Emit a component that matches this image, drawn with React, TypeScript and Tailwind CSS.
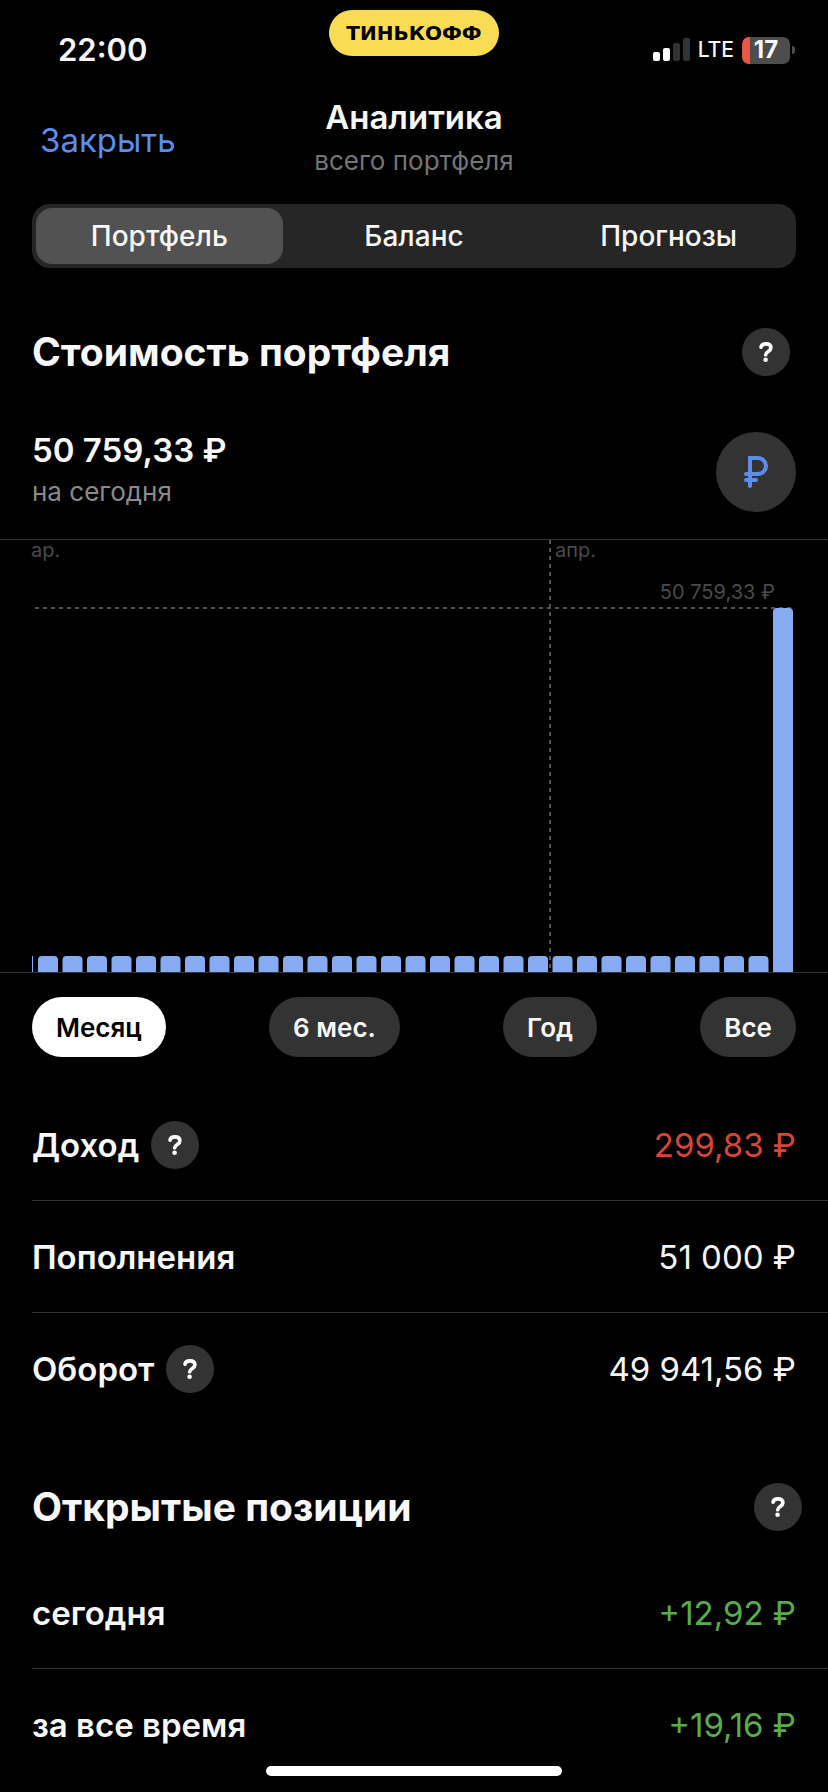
import React, { useState } from 'react';

const tabs = ['Портфель', 'Баланс', 'Прогнозы'];
const periods = ['Месяц', '6 мес.', 'Год', 'Все'];

const totals = [
  { label: 'Доход', value: '299,83 ₽', color: 'text-[#d9443a]', help: true },
  { label: 'Пополнения', value: '51 000 ₽', color: 'text-[#f5f5f5]', help: false },
  { label: 'Оборот', value: '49 941,56 ₽', color: 'text-[#f5f5f5]', help: true },
];

const positions = [
  { label: 'сегодня', value: '+12,92 ₽', color: 'text-[#58ad4b]', help: false },
  { label: 'за все время', value: '+19,16 ₽', color: 'text-[#58ad4b]', help: false },
];

// Month of daily values, only the last day is filled
const days = Array.from({ length: 31 }, (_, i) => (i === 30 ? 364 : 16));

const HelpButton: React.FC = () => (
  <button
    type="button"
    aria-label="Справка"
    className="flex size-12 shrink-0 items-center justify-center rounded-full bg-[#333333]"
  >
    <svg width="14" height="20" viewBox="0 0 14 20" fill="none">
      <path
        d="M2 5.2C2.3 3 4.2 1.9 6.9 1.9C9.9 1.9 11.9 3.4 11.9 5.8C11.9 7.6 10.9 8.5 9.3 9.6C7.6 10.7 6.8 11.4 6.7 12.8"
        stroke="#fff"
        strokeWidth="3.6"
        strokeLinecap="round"
      />
      <circle cx="6.6" cy="17.7" r="2.3" fill="#fff" />
    </svg>
  </button>
);

const RubleIcon: React.FC = () => (
  <svg width="26" height="34" viewBox="0 0 26 34" fill="none" stroke="#5b8def" strokeWidth="4">
    <path d="M7 31V3H15A8 8 0 0 1 15 19H3" strokeLinecap="round" />
    <path d="M5 3H9" />
    <path d="M3 25H13" strokeLinecap="round" />
  </svg>
);

const StatusBar: React.FC = () => (
  <div className="grid h-24 grid-cols-3 items-start">
    <div className="pt-8 pl-[58px] text-[31px] leading-9 font-semibold">22:00</div>
    <div className="mt-[10px] flex h-[46px] w-[170px] items-center justify-center justify-self-center rounded-full bg-[#f9dc54] font-['DejaVu_Sans'] text-[20px] font-bold text-black">
      ТИНЬКОФФ
    </div>
    <div className="flex items-center gap-2 justify-self-end pt-8 pr-[33px]">
      <svg width="37" height="24" viewBox="0 0 37 24">
        <rect x="0" y="14" width="7" height="9" rx="2" fill="#fff" />
        <rect x="10" y="10" width="7" height="13" rx="2" fill="#fff" />
        <rect x="20" y="5" width="7" height="18" rx="2" fill="#333" />
        <rect x="30" y="0" width="7" height="23" rx="2" fill="#333" />
      </svg>
      <span className="text-[21px] leading-9 font-medium">LTE</span>
      <div className="flex items-center gap-[2px]">
        <div className="flex h-[27px] w-12 items-center justify-center rounded-[7px] bg-linear-to-r from-[#eb5545] from-[8px] to-[#4d4d4d] to-[8px] text-[24px] font-bold">
          17
        </div>
        <div className="h-2 w-[3px] rounded-r-full bg-[#4d4d4d]" />
      </div>
    </div>
  </div>
);

const Header: React.FC = () => (
  <header className="grid h-[108px] grid-cols-3 items-start px-8">
    <button type="button" className="mt-6 justify-self-start pl-2 text-[33px] leading-10 text-[#5b8def]">
      Закрыть
    </button>
    <div className="mt-px text-center">
      <h1 className="text-[33px] leading-10 font-semibold">Аналитика</h1>
      <p className="mt-2 text-[26px] leading-8 text-[#757575]">всего портфеля</p>
    </div>
  </header>
);

const Chart: React.FC = () => (
  <svg viewBox="0 0 828 434" className="mt-[25px] block h-auto w-full overflow-visible font-['Inter',sans-serif]">
    <path d="M0 .5H828M0 433.5H828" stroke="#333" />
    <path d="M35 69H794" stroke="#545454" strokeWidth="2" strokeDasharray="4 4" />
    <path d="M550 1V432" stroke="#545454" strokeWidth="2" strokeDasharray="4 4" />
    <text x="31" y="18" fontSize="20" fill="#4a4a4a">ар.</text>
    <text x="555" y="18" fontSize="20" fill="#4a4a4a">апр.</text>
    <text x="775" y="60" fontSize="20" fill="#4a4a4a" textAnchor="end">50 759,33 ₽</text>
    <rect x="32" y="417" width="1" height="16" fill="#86abf2" />
    {days.map((h, i) => (
      <path
        key={i}
        d={`M${38 + i * 24.5} 433v${4 - h}q0 -4 4 -4h12q4 0 4 4v${h - 4}z`}
        fill="#86abf2"
      />
    ))}
  </svg>
);

interface RowProps {
  label: string;
  value: string;
  color: string;
  help: boolean;
}

const Row: React.FC<RowProps> = ({ label, value, color, help }) => (
  <li className="flex h-28 items-center justify-between border-b border-[#333333] pr-8 last:border-b-0">
    <div className="flex items-center gap-3">
      <span className="text-[33px] leading-10 font-semibold">{label}</span>
      {help && <HelpButton />}
    </div>
    <span className={`text-[33px] leading-10 ${color}`}>{value}</span>
  </li>
);

export default function App() {
  const [tab, setTab] = useState('Портфель');
  const [period, setPeriod] = useState('Месяц');

  return (
    <div className="min-h-screen w-full overflow-hidden bg-black font-['Inter',sans-serif] text-[#f8f8f8]">
      <StatusBar />
      <Header />

      {/* Segmented control */}
      <div className="mx-8 grid h-16 grid-cols-3 gap-2 rounded-[18px] bg-[#262626] p-1">
        {tabs.map((name) => (
          <button
            key={name}
            type="button"
            onClick={() => setTab(name)}
            className={`rounded-2xl text-[28px] font-medium ${tab === name ? 'bg-[#525252]' : ''}`}
          >
            {name}
          </button>
        ))}
      </div>

      {/* Portfolio value */}
      <section>
        <div className="mt-[60px] flex items-center justify-between pr-[38px] pl-8">
          <h2 className="text-[39px] leading-12 font-bold">Стоимость портфеля</h2>
          <HelpButton />
        </div>
        <div className="mt-[54px] flex items-center justify-between px-8">
          <div>
            <p className="text-[33px] leading-10 font-semibold">50 759,33 ₽</p>
            <p className="text-[26px] leading-11 text-[#8a8a8e]">на сегодня</p>
          </div>
          <button
            type="button"
            aria-label="Валюта"
            className="flex size-20 items-center justify-center rounded-full bg-[#333333]"
          >
            <RubleIcon />
          </button>
        </div>
        <Chart />
        <div className="mt-6 flex justify-between px-8">
          {periods.map((name) => (
            <button
              key={name}
              type="button"
              onClick={() => setPeriod(name)}
              className={`h-15 rounded-full px-6 text-[26px] font-semibold ${
                period === name ? 'bg-white text-black' : 'bg-[#333333]'
              }`}
            >
              {name}
            </button>
          ))}
        </div>
      </section>

      <ul className="mt-8 pl-8">
        {totals.map((row) => (
          <Row key={row.label} {...row} />
        ))}
      </ul>

      {/* Open positions */}
      <section>
        <div className="mt-[58px] flex items-center justify-between pr-[26px] pl-8">
          <h2 className="text-[39px] leading-12 font-bold">Открытые позиции</h2>
          <HelpButton />
        </div>
        <ul className="mt-[26px] pl-8">
          {positions.map((row) => (
            <Row key={row.label} {...row} />
          ))}
        </ul>
      </section>

      {/* Home indicator */}
      <div className="fixed bottom-4 left-1/2 h-[10px] w-[296px] -translate-x-1/2 rounded-full bg-white" />
    </div>
  );
}
